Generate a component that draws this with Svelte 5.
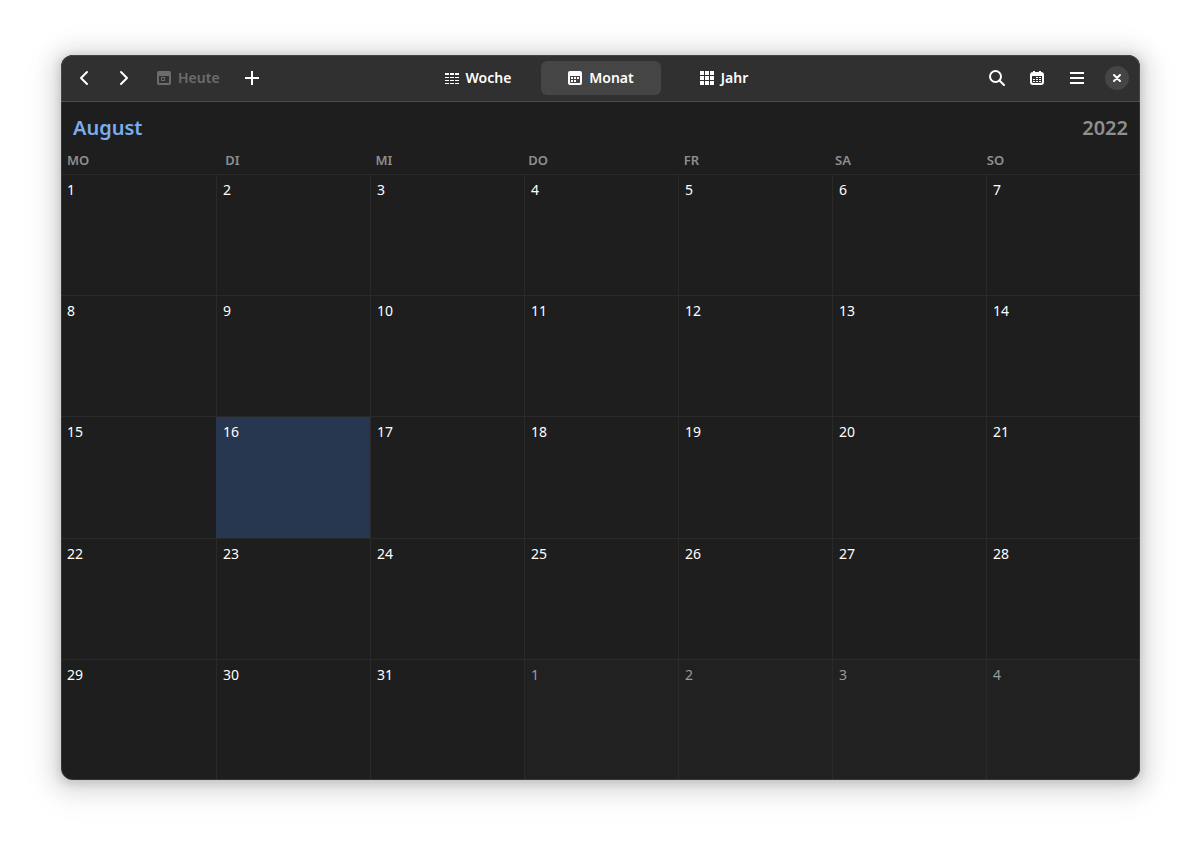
<script lang="ts">
	type View = 'woche' | 'monat' | 'jahr'
	type Day = { key: string; date: number; outside: boolean; today: boolean }

	const weekdays = ['MO', 'DI', 'MI', 'DO', 'FR', 'SA', 'SO']
	const year = 2022
	const month = 7
	const today = 16

	let activeView = $state<View>('monat')

	const monthName = new Date(year, month, 1).toLocaleDateString('de-DE', { month: 'long' })

	const weeks = $derived.by(() => {
		const offset = (new Date(year, month, 1).getDay() + 6) % 7
		const rows: Day[][] = []
		for (let w = 0; w < 5; w++) {
			const row: Day[] = []
			for (let d = 0; d < 7; d++) {
				const date = new Date(year, month, 1 - offset + w * 7 + d)
				const outside = date.getMonth() !== month
				row.push({
					key: `${date.getMonth()}-${date.getDate()}`,
					date: date.getDate(),
					outside,
					today: !outside && date.getDate() === today
				})
			}
			rows.push(row)
		}
		return rows
	})
</script>

<main class="window">
	<header class="headerbar">
		<div class="group">
			<button class="flat" aria-label="Zurück">
				<svg viewBox="0 0 16 16"><path d="M11 2 5 8l6 6" class="line" stroke-linecap="round" stroke-linejoin="round" /></svg>
			</button>
			<button class="flat" aria-label="Vor">
				<svg viewBox="0 0 16 16"><path d="m5 2 6 6-6 6" class="line" stroke-linecap="round" stroke-linejoin="round" /></svg>
			</button>
			<button class="flat labelled" disabled>
				<svg viewBox="0 0 16 16">
					<path
						fill-rule="evenodd"
						d="M3 1h10a2 2 0 0 1 2 2v10a2 2 0 0 1-2 2H3a2 2 0 0 1-2-2V3a2 2 0 0 1 2-2ZM3 6v7h10V6Zm2 1h4v4H5Zm1 1v2h2V8Z"
					/>
				</svg>
				Heute
			</button>
			<button class="flat" aria-label="Termin hinzufügen">
				<svg viewBox="0 0 16 16"><path d="M7 1h2v6h6v2H9v6H7V9H1V7h6z" /></svg>
			</button>
		</div>

		<div class="switcher" role="group" aria-label="Ansicht">
			<button class:active={activeView === 'woche'} onclick={() => (activeView = 'woche')}>
				<svg viewBox="0 0 16 16">
					{#each [1, 6, 11] as x (x)}
						<path d="M{x} 3h4v2h-4zM{x} 7h4v1h-4zM{x} 10h4v1h-4zM{x} 13h4v1h-4z" />
					{/each}
				</svg>
				Woche
			</button>
			<button class:active={activeView === 'monat'} onclick={() => (activeView = 'monat')}>
				<svg viewBox="0 0 16 16">
					<path
						fill-rule="evenodd"
						d="M3 1h10a2 2 0 0 1 2 2v10a2 2 0 0 1-2 2H3a2 2 0 0 1-2-2V3a2 2 0 0 1 2-2ZM3 6v7h10V6Z"
					/>
					<path d="M4 7h2v2H4zM7 7h2v2H7zM10 7h2v2h-2zM4 10h2v2H4zM7 10h2v2H7z" />
				</svg>
				Monat
			</button>
			<button class:active={activeView === 'jahr'} onclick={() => (activeView = 'jahr')}>
				<svg viewBox="0 0 16 16">
					{#each [1, 6, 11] as x (x)}
						<path d="M{x} 1h4v4h-4zM{x} 6h4v4h-4zM{x} 11h4v4h-4z" />
					{/each}
				</svg>
				Jahr
			</button>
		</div>

		<div class="group end">
			<button class="flat" aria-label="Suchen">
				<svg viewBox="0 0 16 16">
					<circle cx="6.5" cy="6.5" r="5.5" class="line" />
					<path d="m10.5 10.5 4.5 4.5" class="line" stroke-linecap="round" />
				</svg>
			</button>
			<button class="flat" aria-label="Kalender verwalten">
				<svg viewBox="0 0 16 16">
					<path
						fill-rule="evenodd"
						d="M4 1h2v1h4V1h2v1a3 3 0 0 1 3 3v7a3 3 0 0 1-3 3H4a3 3 0 0 1-3-3V5a3 3 0 0 1 3-3ZM3 6v6a1 1 0 0 0 1 1h8a1 1 0 0 0 1-1V6Z"
					/>
					<path d="M7 7h2v1H7zM10 7h2v1h-2zM4 9h2v1H4zM7 9h2v1H7zM10 9h2v1h-2zM4 11h2v1H4zM7 11h2v1H7zM10 11h2v1h-2z" />
				</svg>
			</button>
			<button class="flat" aria-label="Menü">
				<svg viewBox="0 0 16 16"><path d="M1 2h14v2H1zM1 7h14v2H1zM1 12h14v2H1z" /></svg>
			</button>
			<button class="flat close" aria-label="Schließen">
				<span>
					<svg viewBox="0 0 16 16"><path d="m5 5 6 6M11 5l-6 6" class="line" stroke-linecap="round" /></svg>
				</span>
			</button>
		</div>
	</header>

	<div class="title">
		<h1>{monthName}</h1>
		<span class="year">{year}</span>
	</div>

	<table class="month">
		<thead>
			<tr>
				{#each weekdays as name (name)}
					<th scope="col">{name}</th>
				{/each}
			</tr>
		</thead>
		<tbody>
			{#each weeks as week, i (i)}
				<tr>
					{#each week as day (day.key)}
						<td class:outside={day.outside} class:today={day.today}>{day.date}</td>
					{/each}
				</tr>
			{/each}
		</tbody>
	</table>
</main>

<style>
	:global(body) {
		background: #fff;
	}

	.window {
		box-sizing: border-box;
		display: flex;
		flex-direction: column;
		min-height: calc(100vh - 122px);
		margin: 55px 61px 67px;
		overflow: hidden;
		border-radius: 12px;
		background: #1e1e1e;
		color: #fff;
		font-family: 'Noto Sans', sans-serif;
		font-size: 14px;
		line-height: 20px;
		position: relative;
		box-shadow:
			0 2px 8px 2px rgba(0, 0, 0, 0.13),
			0 3px 20px 10px rgba(0, 0, 0, 0.09),
			0 6px 32px 16px rgba(0, 0, 0, 0.04);
	}

	/* thin light edge over all of the content */
	.window::after {
		content: '';
		position: absolute;
		inset: 0;
		border-radius: inherit;
		box-shadow: inset 0 0 0 1px rgba(255, 255, 255, 0.1);
		pointer-events: none;
	}

	.headerbar {
		display: grid;
		grid-template-columns: 1fr auto 1fr;
		align-items: center;
		padding: 6px;
		background: #303030;
		border-bottom: 1px solid #4d4d4d;
	}

	.group,
	.switcher {
		display: flex;
		gap: 6px;
	}

	.switcher {
		gap: 3px;
	}

	.end {
		justify-content: flex-end;
	}

	button {
		display: flex;
		align-items: center;
		justify-content: center;
		gap: 6px;
		height: 34px;
		padding: 0;
		border: none;
		border-radius: 6px;
		background: transparent;
		color: inherit;
		font: inherit;
		font-weight: 600;

		&:hover:enabled {
			background: #3a3a3a;
		}
	}

	.flat {
		width: 34px;
	}

	.labelled {
		width: auto;
		padding: 0 9px;
	}

	button:disabled {
		color: #6c6c6c;
	}

	.switcher button {
		width: 120px;

		&.active {
			background: #454545;
		}
	}

	.close span {
		display: flex;
		align-items: center;
		justify-content: center;
		width: 24px;
		height: 24px;
		border-radius: 50%;
		background: #454545;
	}

	svg {
		width: 16px;
		height: 16px;
		fill: currentColor;
	}

	.line {
		fill: none;
		stroke: currentColor;
		stroke-width: 2;
	}

	.title {
		display: flex;
		align-items: center;
		justify-content: space-between;
		padding: 12px 12px 8px;
		font-size: 20px;
		line-height: 28px;
		font-weight: 600;
	}

	h1 {
		margin: 0;
		color: #78aeed;
		font: inherit;
	}

	.year {
		color: #8f8f8f;
	}

	.month {
		flex: 1;
		display: flex;
		flex-direction: column;
	}

	thead tr {
		display: flex;
		padding-right: 6px;
	}

	th {
		flex: 1 1 auto;
		padding: 0 0 4px 6px;
		color: #8f8f8f;
		font-size: 13px;
		font-weight: 600;
		text-align: left;
	}

	tbody {
		flex: 1;
		display: grid;
		grid-auto-rows: 1fr;
	}

	/* the first column starts after the window edge */
	tbody tr {
		display: grid;
		grid-template-columns: repeat(7, 1fr);
		padding-left: 1px;
		border-top: 1px solid #2a2a2a;
	}

	td {
		padding: 5px 6px;
		border-left: 1px solid #2a2a2a;

		&:first-child {
			padding-left: 5px;
			border-left: none;
		}
	}

	.outside {
		background: #212121;
		color: #9a9a9a;
	}

	.today {
		background: #26374f;
		border-color: #26374f;
	}
</style>
